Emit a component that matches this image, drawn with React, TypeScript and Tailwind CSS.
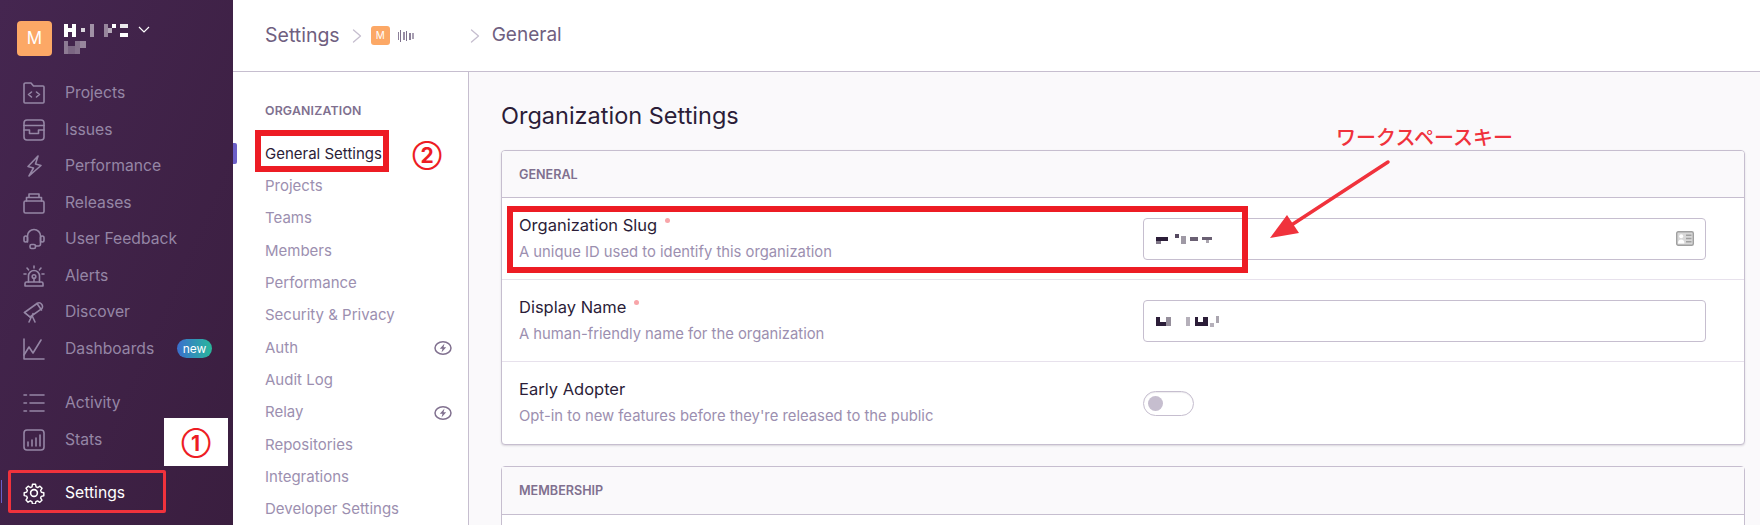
const font = "font-['Inter','Noto_Sans_CJK_JP',sans-serif]";

type IconProps = { children: React.ReactNode };

function NavIcon({ children }: IconProps) {
  return (
    <svg width="22" height="22" viewBox="0 0 22 22" fill="none" stroke="currentColor" strokeWidth="1.6" strokeLinecap="round" strokeLinejoin="round">
      {children}
    </svg>
  );
}

const icons: Record<string, React.ReactNode> = {
  Projects: (
    <>
      <path d="M1 20V2.500C1 1.600 1.600 1 2.500 1H8l2.500 3H20c.6 0 1 .4 1 1v15c0 .6-.4 1-1 1H2c-.6 0-1-.4-1-1z" />
      <path d="M8.500 10l-3 2.500 3 2.500M13.500 10l3 2.500-3 2.500" />
    </>
  ),
  Issues: (
    <>
      <rect x="1" y="1" width="20" height="20" rx="3" />
      <path d="M1 6.500h20M1 11h5.500v3.500h9V11H21" />
    </>
  ),
  Performance: <path d="M15 1L5 11.500l5.500 1.500L6 21l12-10.500-5.500-1.500z" />,
  Releases: (
    <>
      <rect x="1" y="9" width="20" height="12" rx="1.500" />
      <path d="M3.500 9V5.500h15V9M6 5.500V2h10v3.500" />
    </>
  ),
  "User Feedback": (
    <>
      <path d="M4.500 14V8a6.500 6.500 0 0 1 13 0v6" />
      <rect x="1" y="8" width="3.500" height="6" rx="1.700" />
      <rect x="17.500" y="8" width="3.500" height="6" rx="1.700" />
      <path d="M17.500 14v2c0 1.500-1 2-2 2h-3" />
      <rect x="7" y="16.500" width="5.500" height="4" rx="1.500" />
    </>
  ),
  Alerts: (
    <>
      <path d="M5.500 17V11a5.500 5.500 0 0 1 11 0v6" />
      <circle cx="11" cy="11.500" r="1.800" />
      <path d="M11 13.500V17M2 21v-2.500c0-.8.6-1.500 1.500-1.500h15c.9 0 1.500.7 1.500 1.500V21zM11 1v2M4 3l1.500 1.800M18 3l-1.500 1.800M1 9h2M19 9h2" />
    </>
  ),
  Discover: (
    <>
      <path d="M1.500 11.500L14 2.500c1.500-1 3.500-.8 4.800 1 1.200 1.700.8 3.700-.7 4.700L7 16z" />
      <path d="M1.500 11.500L7 16M14 2.500l4.500 6.500M9 14.500l3 6.500M9 14.500l-3 6.500M10 12.500v1" />
    </>
  ),
  Dashboards: (
    <>
      <path d="M1 1v20h20" />
      <path d="M1 17l5-8 4 6 8-13" />
    </>
  ),
  Activity: (
    <>
      <path d="M7 3h14M7 11h14M7 19h14M1 3h2.500M1 11h2.500M1 19h2.500" />
    </>
  ),
  Stats: (
    <>
      <rect x="1" y="1" width="20" height="20" rx="3" />
      <path d="M5 17v-4M9 17v-6M13 17V9M17 17V6" />
    </>
  ),
  Settings: (
    <>
      <circle cx="11" cy="11" r="3.400" />
      <path d="M9.300 1.300h3.400l.6 2.800 1.800.8 2.500-1.500 2.300 2.400-1.500 2.400.8 1.900 2.700.6v3.400l-2.800.6-.8 1.800 1.500 2.500-2.400 2.300-2.400-1.500-1.900.8-.6 2.600H9.300l-.6-2.700-1.800-.8-2.500 1.500-2.300-2.400 1.500-2.400-.8-1.900-2.700-.6v-3.200l2.800-.7.7-1.800-1.500-2.500 2.400-2.300 2.400 1.500 1.900-.8z" transform="translate(11 11) scale(.9) translate(-11 -11)" />
    </>
  ),
};

const mainNav = ["Projects", "Issues", "Performance", "Releases", "User Feedback", "Alerts", "Discover", "Dashboards"];

const settingsNav = [
  { label: "General Settings", active: true },
  { label: "Projects" },
  { label: "Teams" },
  { label: "Members" },
  { label: "Performance" },
  { label: "Security & Privacy" },
  { label: "Auth", bolt: true },
  { label: "Audit Log" },
  { label: "Relay", bolt: true },
  { label: "Repositories" },
  { label: "Integrations" },
  { label: "Developer Settings" },
];

function SideItem({ label, active, badge }: { label: string; active?: boolean; badge?: boolean }) {
  return (
    <div className={`flex h-[36.5px] items-center pl-[23px] pr-[21px] ${active ? "text-white" : "text-[#9586a5]"}`}>
      <NavIcon>{icons[label]}</NavIcon>
      <span className="ml-[20px] text-[15.7px]">{label}</span>
      {badge && (
        <span className="ml-auto flex h-[19px] w-[35px] items-center justify-center rounded-full bg-gradient-to-r from-[#3b6ecc] to-[#2ab69a] text-[12px] leading-none text-white">
          new
        </span>
      )}
    </div>
  );
}

// blurred-out text from the screenshot, drawn as little blocks
function Mosaic({ w, h, cells, color }: { w: number; h: number; cells: number[][]; color: string }) {
  return (
    <svg width={w} height={h} viewBox={`0 0 ${w} ${h}`} className="block" shapeRendering="crispEdges">
      {cells.map(([x, y, cw, ch, o], i) => (
        <rect key={i} x={x} y={y} width={cw} height={ch} fill={color} opacity={o} />
      ))}
    </svg>
  );
}

function BoltBadge() {
  return (
    <svg width="18" height="14" viewBox="0 0 18 14" fill="none" className="text-[#80708f]">
      <ellipse cx="9" cy="7" rx="8" ry="6.200" stroke="currentColor" strokeWidth="1.500" />
      <path d="M10.500 2.500L5.800 7.800h2.700L7.500 11.500l4.700-5.300H9.500z" fill="currentColor" />
    </svg>
  );
}

function Chevron() {
  return (
    <svg width="10" height="16" viewBox="0 0 10 16" fill="none" stroke="#c6becf" strokeWidth="1.300" strokeLinecap="round" strokeLinejoin="round">
      <path d="M1.500 2l7 6-7 6" />
    </svg>
  );
}

function Row({ label, help, required, children, last }: { label: string; help: string; required?: boolean; children: React.ReactNode; last?: boolean }) {
  return (
    <div className={`flex h-[82px] items-center pl-[17px] ${last ? "" : "border-b border-[#e7e1ec]"}`}>
      <div className="w-[624px] -translate-y-[1px]">
        <div className="flex text-[16.5px] leading-[20px] text-[#2b1d38]">
          {label}
          {required && <span className="ml-[8px] mt-[3px] h-[5px] w-[5px] rounded-full bg-[#f8a5a9]" />}
        </div>
        <div className="mt-[8px] text-[14.8px] leading-[18px] text-[#9c8fb0]">{help}</div>
      </div>
      {children}
    </div>
  );
}

function Input({ children, icon }: { children: React.ReactNode; icon?: boolean }) {
  return (
    <div className="flex h-[42px] w-[563px] items-center justify-between rounded-[4px] border border-[#c6becf] bg-white pl-[12px] pr-[11px]">
      {children}
      {icon && (
        <svg width="18" height="15" viewBox="0 0 18 15">
          <rect x="0.700" y="0.700" width="16.600" height="13.600" rx="1.500" fill="#d8d8d8" stroke="#a0a0a0" strokeWidth="1.400" />
          <circle cx="5.200" cy="5.200" r="2" fill="#ffffff" />
          <path d="M2 12.500c0-2.500 1.200-4 3.200-4s3.200 1.500 3.200 4z" fill="#ffffff" />
          <path d="M10 4.200h5.500M10 7.500h5.500M10 10.800h5.500" stroke="#a0a0a0" strokeWidth="1.500" />
        </svg>
      )}
    </div>
  );
}

export default function App() {
  return (
    <div className={`relative flex h-[525px] w-[1760px] overflow-hidden bg-white ${font}`}>
      {/* Sidebar */}
      <aside className="flex h-full w-[233px] shrink-0 flex-col bg-gradient-to-br from-[#452650] to-[#3a1e3f]">
        <div className="flex h-[75px] shrink-0 items-start pl-[17px] pt-[21px]">
          <div className="flex h-[35px] w-[35px] items-center justify-center rounded-[4px] bg-[#fca866] text-[17px] text-white">M</div>
          <div className="ml-[12px] mt-[3px]">
            <Mosaic
              w={66}
              h={13}
              color="#ffffff"
              cells={[[0, 0, 4, 13, 1], [4, 4, 4, 4, 1], [8, 0, 4, 13, 1], [17, 4, 4, 4, 0.8], [26, 0, 4, 13, 0.5], [40, 0, 4, 13, 0.45], [44, 4, 4, 5, 0.6], [48, 0, 4, 4, 1], [56, 0, 8, 4, 0.9], [56, 9, 8, 4, 1]]}
            />
            <div className="mt-[4px]">
              <Mosaic w={22} h={13} color="#ffffff" cells={[[0, 0, 4, 13, 0.4], [4, 5, 7, 8, 0.3], [11, 0, 5, 13, 0.35], [16, 0, 6, 7, 0.45]]} />
            </div>
          </div>
          <svg width="12" height="8" viewBox="0 0 12 8" fill="none" stroke="#fff" strokeWidth="1.200" className="ml-[8px] mt-[5px]">
            <path d="M1 1l5 5 5-5" />
          </svg>
        </div>
        {mainNav.map((n) => (
          <SideItem key={n} label={n} badge={n === "Dashboards"} />
        ))}
        <div className="h-[18px] shrink-0" />
        <SideItem label="Activity" />
        <SideItem label="Stats" />
        <div className="h-[17px] shrink-0" />
        <SideItem label="Settings" active />
      </aside>

      <div className="flex min-w-0 flex-1 flex-col">
        {/* Breadcrumb */}
        <header className="flex h-[72px] shrink-0 items-center border-b border-[#c6becf] pl-[32px] text-[19.5px] text-[#6f6080]">
          <span>Settings</span>
          <span className="ml-[12px] flex"><Chevron /></span>
          <span className="ml-[9px] flex h-[19px] w-[19px] items-center justify-center rounded-[3px] bg-[#fca866] text-[10px] text-white">M</span>
          <span className="ml-[8px]">
            <Mosaic w={16} h={12} color="#6f6080" cells={[[0, 2, 1, 8, 0.8], [2, 0, 1, 12, 0.9], [5, 2, 2, 8, 0.7], [8, 1, 1, 10, 0.9], [11, 3, 2, 7, 0.8], [14, 3, 2, 6, 0.6]]} />
          </span>
          <span className="ml-[56px] flex"><Chevron /></span>
          <span className="ml-[12px] text-[19px]">General</span>
        </header>

        <div className="flex min-h-0 flex-1">
          {/* Settings nav */}
          <nav className="relative w-[236px] shrink-0 border-r border-[#c6becf] pl-[32px] pr-[16px] pt-[30px]">
            <div className="mb-[18px] text-[12.3px] font-semibold leading-[18px] tracking-[0.2px] text-[#80708f]">ORGANIZATION</div>
            {settingsNav.map((item) => (
              <div key={item.label} className={`flex h-[32.3px] items-center justify-between text-[15px] ${item.active ? "text-[#2b1d38]" : "text-[#9c8fb0]"}`}>
                {item.label}
                {item.bolt && <BoltBadge />}
              </div>
            ))}
            <span className="absolute left-0 top-[71px] h-[21px] w-[4px] rounded-r-[2px] bg-[#6c5fc7]" />
          </nav>

          {/* Content */}
          <main className="min-w-0 flex-1 bg-[#faf9fb] pl-[32px] pr-[15px] pt-[28px]">
            <h1 className="mb-[18px] text-[23.5px] font-normal leading-[32px] text-[#2b1d38]">Organization Settings</h1>
            <section className="overflow-hidden rounded-[4px] border border-[#c6becf] bg-white shadow-[0_1px_2px_rgba(43,29,56,0.15)]">
              <div className="flex h-[47px] items-center border-b border-[#c6becf] bg-[#faf9fb] pl-[17px] pt-[2px] text-[12.6px] font-semibold text-[#80708f]">GENERAL</div>
              <Row label="Organization Slug" help="A unique ID used to identify this organization" required>
                <Input icon>
                  <Mosaic w={56} h={10} color="#2b1d38" cells={[[0, 3, 12, 4, 1], [0, 7, 5, 3, 0.6], [19, 0, 4, 4, 0.8], [25, 2, 5, 8, 0.45], [34, 3, 8, 4, 0.7], [46, 3, 10, 3, 0.7], [50, 6, 3, 3, 0.4]]} />
                </Input>
              </Row>
              <Row label="Display Name" help="A human-friendly name for the organization" required>
                <Input>
                  <Mosaic w={65} h={12} color="#2b1d38" cells={[[0, 2, 4, 9, 1], [4, 7, 6, 4, 1], [10, 2, 5, 9, 0.5], [30, 2, 4, 9, 0.35], [39, 7, 8, 4, 1], [39, 2, 3, 5, 1], [47, 2, 5, 9, 1], [54, 8, 4, 4, 0.35], [60, 1, 3, 7, 0.4]]} />
                </Input>
              </Row>
              <Row label="Early Adopter" help="Opt-in to new features before they're released to the public" last>
                <div className="flex h-[25px] w-[51px] items-center rounded-full border border-[#c6becf] pl-[4px] shadow-[inset_0_1px_1px_rgba(43,29,56,0.08)]">
                  <span className="h-[15px] w-[15px] rounded-full bg-[#c6becf]" />
                </div>
              </Row>
            </section>
            <section className="mt-[21px] rounded-[4px] border border-[#c6becf] bg-white">
              <div className="flex h-[48px] items-center border-b border-[#c6becf] bg-[#faf9fb] pl-[17px] pt-[2px] text-[12.6px] font-semibold text-[#80708f]">MEMBERSHIP</div>
              <div className="h-[40px]" />
            </section>
          </main>
        </div>
      </div>

      {/* Annotations drawn on top of the screenshot */}
      <div className="absolute left-[1px] top-[480px] h-[23px] w-[1px] bg-[#6c5fc7]" />
      <div className="absolute left-[8px] top-[470px] h-[43px] w-[158px] rounded-[2px] border-[3px] border-[#f0323c]" />
      <div className="absolute left-[164px] top-[418px] flex h-[48px] w-[64px] items-center justify-center bg-white pt-[2px] text-[21px] font-bold leading-none text-[#ed1c24]">①</div>
      <div className="absolute left-[255px] top-[130px] h-[42px] w-[134px] border-[6px] border-[#ed1c24]" />
      <div className="absolute left-[406px] top-[135px] flex h-[40px] w-[42px] items-center justify-center text-[21px] font-bold leading-none text-[#ed1c24]">②</div>
      <div className="absolute left-[507px] top-[206px] h-[67px] w-[741px] border-[6px] border-[#ed1c24]" />
      <div className="absolute left-[1336px] top-[125px] text-[20px] font-medium leading-[26px] text-[#f0323c]">ワークスペースキー</div>
      <svg className="absolute left-[1260px] top-[155px]" width="140" height="90" viewBox="0 0 140 90" fill="none">
        <path d="M128 7L33 69" stroke="#f0323c" strokeWidth="3.500" strokeLinecap="round" />
        <path d="M10 83L27 60l12 18z" fill="#f0323c" />
      </svg>
    </div>
  );
}
